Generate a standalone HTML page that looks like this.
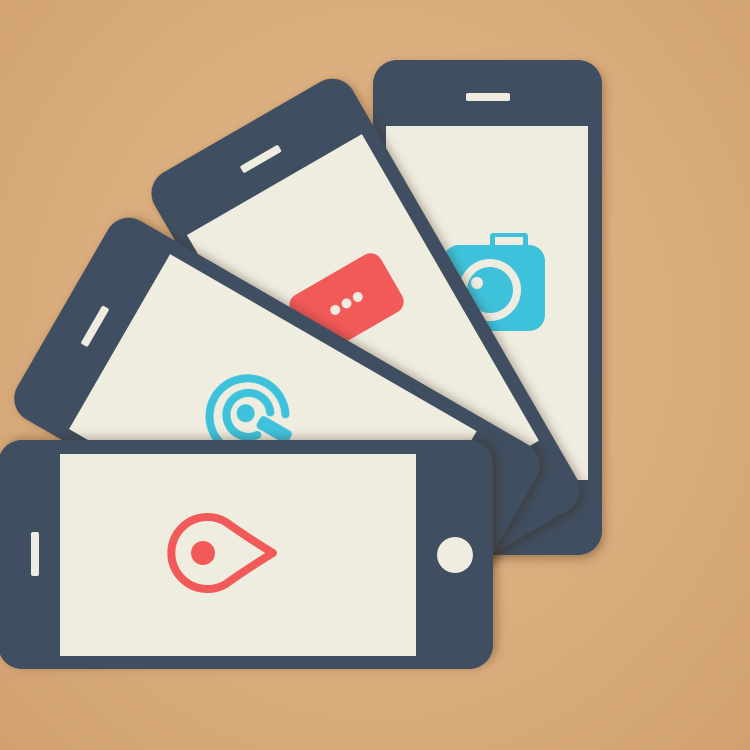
<!DOCTYPE html>
<html><head><meta charset="utf-8"><style>
html,body{margin:0;padding:0}
body{width:750px;height:750px;overflow:hidden;position:relative;
background:radial-gradient(ellipse at 50% 45%,#e2b888 0%,#daac7c 60%,#d0a070 100%);}
.p{position:absolute;left:373px;top:60px;width:229px;height:495px;transform-origin:117px 492px;
filter:drop-shadow(2px 4px 5px rgba(60,35,10,.35));}
.p svg{display:block}
</style></head><body>

<div class="p" style="transform:rotate(0deg)">
<svg width="229" height="495" viewBox="0 0 229 495">
<rect x="0" y="0" width="229" height="495" rx="24" fill="#3f4e60"/>
<rect x="13" y="66" width="202" height="354" fill="#efece0"/>
<rect x="93" y="33" width="44" height="8" rx="2" fill="#efece0"/>
<circle cx="114" cy="457" r="18" fill="#efece0"/>
<rect x="117" y="173" width="38" height="16" rx="3" fill="#3ec2dc"/>
<rect x="122" y="177" width="28" height="9" fill="#efece0"/>
<rect x="70" y="185" width="102" height="86" rx="16" fill="#3ec2dc"/>
<circle cx="117" cy="230" r="31" fill="#efece0"/>
<circle cx="117" cy="230" r="23" fill="#3ec2dc"/>
<circle cx="104" cy="223" r="6" fill="#efece0"/>
</svg></div>

<div class="p" style="transform:rotate(-30deg)">
<svg width="229" height="495" viewBox="0 0 229 495">
<rect x="0" y="0" width="229" height="495" rx="24" fill="#3f4e60"/>
<rect x="13" y="66" width="202" height="354" fill="#efece0"/>
<rect x="93" y="33" width="44" height="8" rx="2" fill="#efece0"/>
<circle cx="114" cy="457" r="18" fill="#efece0"/>
<rect x="65" y="172" width="104" height="66" rx="12" fill="#f25a5a"/>
<circle cx="104" cy="205" r="5" fill="#efece0"/>
<circle cx="117" cy="205" r="5" fill="#efece0"/>
<circle cx="130" cy="205" r="5" fill="#efece0"/>
</svg></div>

<div class="p" style="transform:rotate(-60deg)">
<svg width="229" height="495" viewBox="0 0 229 495">
<rect x="0" y="0" width="229" height="495" rx="24" fill="#3f4e60"/>
<rect x="13" y="66" width="202" height="354" fill="#efece0"/>
<rect x="93" y="33" width="44" height="8" rx="2" fill="#efece0"/>
<circle cx="114" cy="457" r="18" fill="#efece0"/>
<g fill="none" stroke="#3ec2dc" stroke-width="8" stroke-linecap="round">
<path d="M96 248 A38 38 0 1 1 134 246"/>
<path d="M102 232 A22 22 0 1 1 128 232"/>
</g>
<circle cx="115" cy="211" r="9" fill="#3ec2dc"/>
<rect x="108" y="226" width="14" height="36" rx="4" fill="#3ec2dc"/>
</svg></div>

<div class="p" style="transform:rotate(-90deg)">
<svg width="229" height="495" viewBox="0 0 229 495">
<rect x="0" y="0" width="229" height="495" rx="24" fill="#3f4e60"/>
<rect x="13" y="62" width="202" height="356" fill="#efece0"/>
<rect x="93" y="33" width="44" height="8" rx="2" fill="#efece0"/>
<circle cx="114" cy="457" r="18" fill="#efece0"/>
<path d="M116 275 Q104 255 88 232 A36 36 0 1 1 144 232 Q128 255 116 275 Z" fill="none" stroke="#f25a5a" stroke-width="8" stroke-linejoin="round"/>
<circle cx="116" cy="205" r="12" fill="#f25a5a"/>
</svg></div>

</body></html>
